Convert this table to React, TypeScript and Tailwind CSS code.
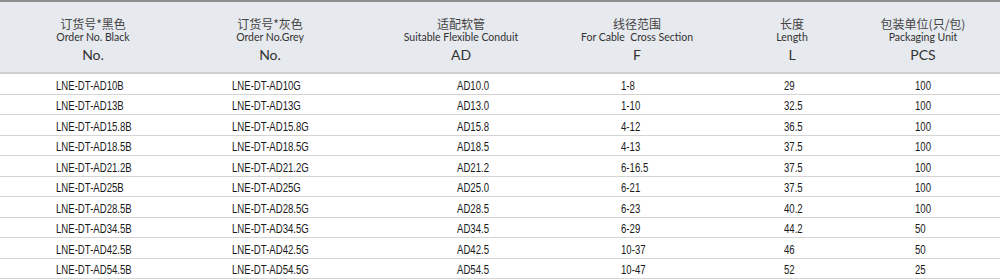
import React from "react";

const rows = [
  ["LNE-DT-AD10B", "LNE-DT-AD10G", "AD10.0", "1-8", "29", "100"],
  ["LNE-DT-AD13B", "LNE-DT-AD13G", "AD13.0", "1-10", "32.5", "100"],
  ["LNE-DT-AD15.8B", "LNE-DT-AD15.8G", "AD15.8", "4-12", "36.5", "100"],
  ["LNE-DT-AD18.5B", "LNE-DT-AD18.5G", "AD18.5", "4-13", "37.5", "100"],
  ["LNE-DT-AD21.2B", "LNE-DT-AD21.2G", "AD21.2", "6-16.5", "37.5", "100"],
  ["LNE-DT-AD25B", "LNE-DT-AD25G", "AD25.0", "6-21", "37.5", "100"],
  ["LNE-DT-AD28.5B", "LNE-DT-AD28.5G", "AD28.5", "6-23", "40.2", "100"],
  ["LNE-DT-AD34.5B", "LNE-DT-AD34.5G", "AD34.5", "6-29", "44.2", "50"],
  ["LNE-DT-AD42.5B", "LNE-DT-AD42.5G", "AD42.5", "10-37", "46", "50"],
  ["LNE-DT-AD54.5B", "LNE-DT-AD54.5G", "AD54.5", "10-47", "52", "25"],
];

const headers = [
  ["订货号*黑色", "Order No. Black", "No."],
  ["订货号*灰色", "Order No.Grey", "No."],
  ["适配软管", "Suitable Flexible Conduit", "AD"],
  ["线径范围", "For Cable\u00a0 Cross Section", "F"],
  ["长度", "Length", "L"],
  ["包装单位(只/包)", "Packaging Unit", "PCS"],
];

const pads = ["pl-[56px]", "pl-[46px]", "pl-[103px]", "pl-[53px]", "pl-[78px]", "pl-[37px]"];

const grid = "grid grid-cols-[186px_168px_214px_138px_172px_90px]";

export default function App() {
  return (
    <div className="w-[1000px] h-[280px] bg-white text-[#222] overflow-hidden">
      <div className={`${grid} w-full h-[74px] bg-[#e6e9ee] border-t-2 border-b-2 border-t-[#8e8e8e] border-b-[#cfcfcf] pr-[32px] box-border`}>
        {headers.map((h, i) => (
          <div key={i} className="flex flex-col items-center pt-[15px] whitespace-nowrap text-[#333]">
            <div className="text-[12px] leading-[14px] font-['Noto_Sans_CJK_SC',sans-serif] text-[#444]">{h[0]}</div>
            <div className="text-[10.5px] leading-[13px] font-['Lato',sans-serif]">{h[1]}</div>
            <div className="mt-[2px] text-[14px] leading-[18px] font-['Lato',sans-serif]">{h[2]}</div>
          </div>
        ))}
      </div>
      {rows.map((r, ri) => (
        <div key={ri} className={`${grid} h-[20.5px] border-b-[1.5px] border-[#d4d4d4] box-border`}>
          {r.map((c, ci) => (
            <div key={ci} className={`${pads[ci]} flex items-end pb-[1px] whitespace-nowrap`}>
              <span className="inline-block origin-left scale-x-[0.8] text-[12px] leading-[13px] font-['Liberation_Sans',sans-serif] text-[#1a1a1a]">
                {c}
              </span>
            </div>
          ))}
        </div>
      ))}
    </div>
  );
}
